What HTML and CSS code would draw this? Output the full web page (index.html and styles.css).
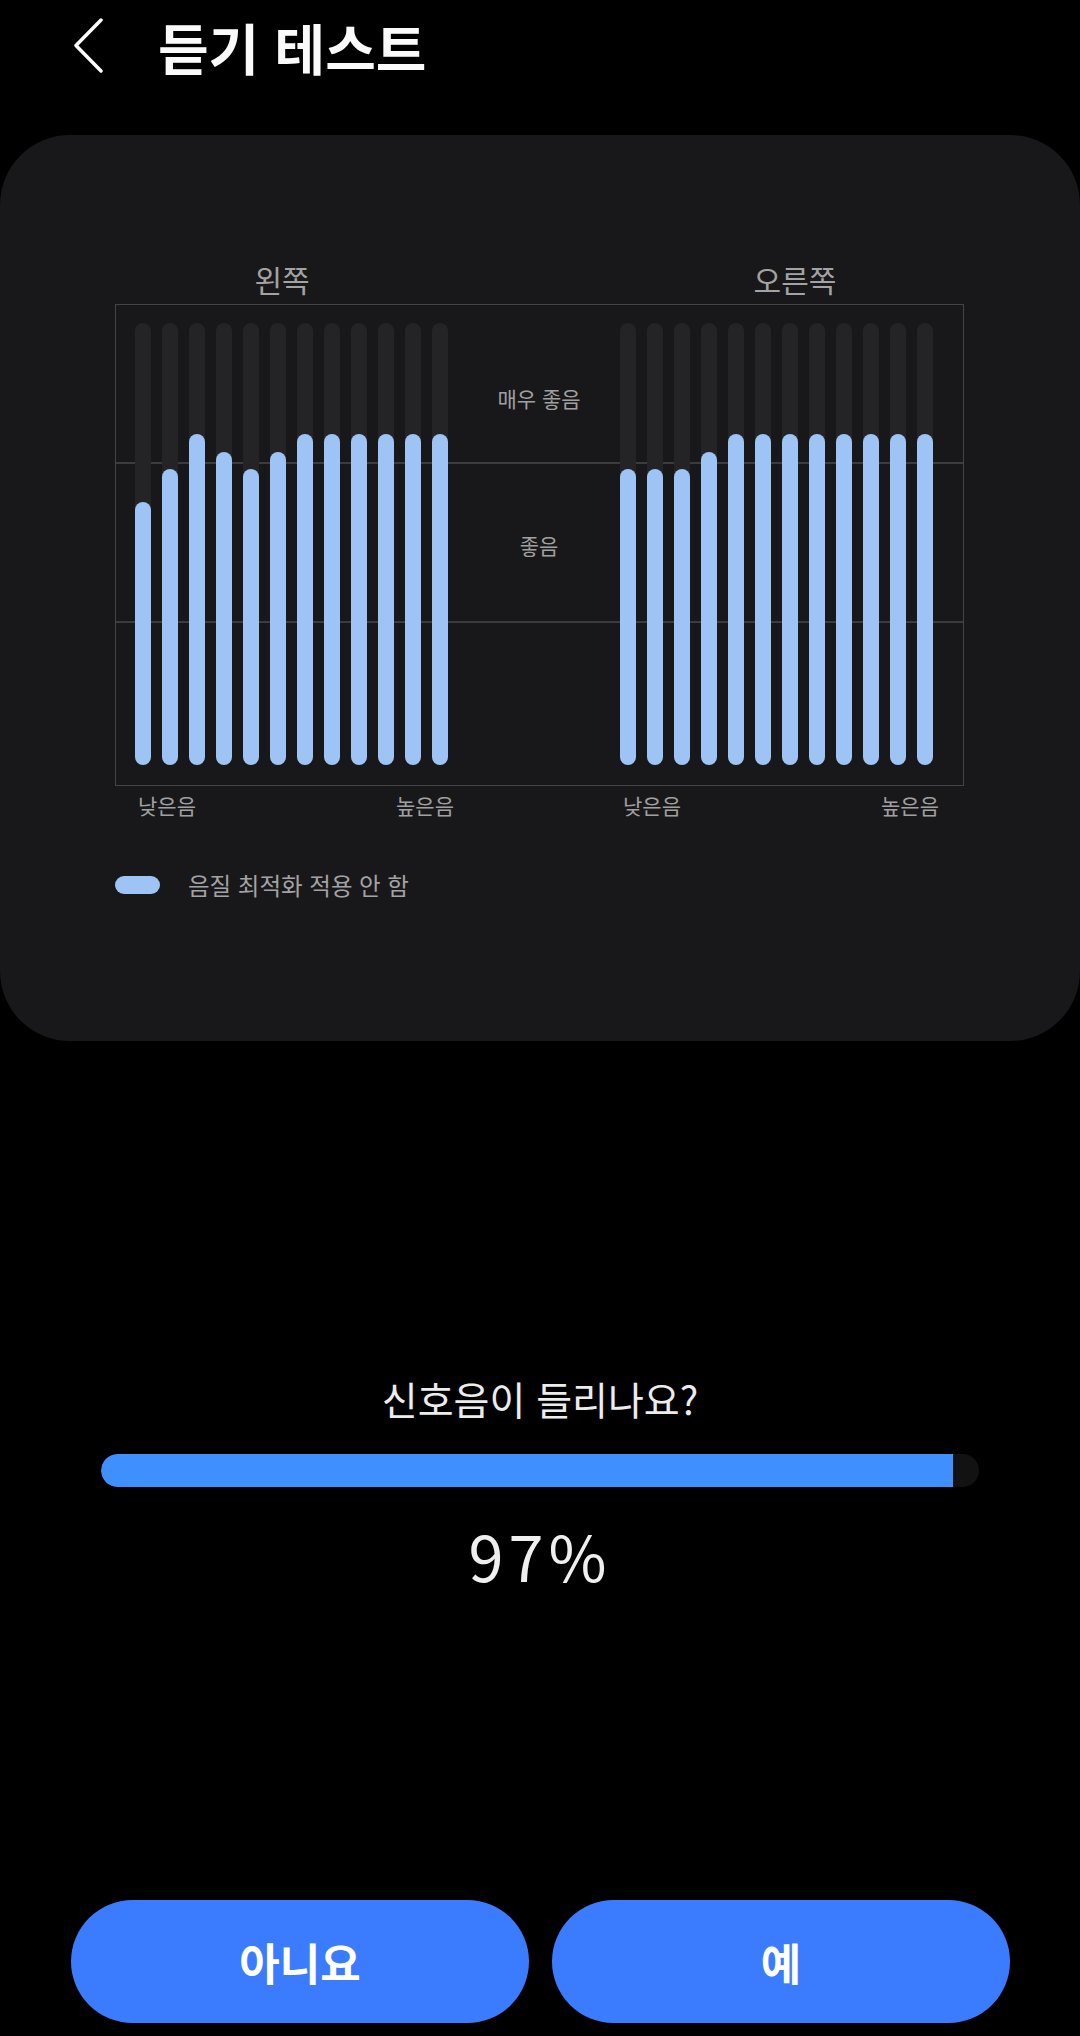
FILE: index.html
```html
<!DOCTYPE html>
<html lang="ko">
<head>
    <meta charset="UTF-8">
    <meta name="viewport" content="width=device-width, initial-scale=1.0">
    <title>듣기 테스트</title>
    <link rel="stylesheet" href="styles.css">
</head>
<body>
    <div class="screen">
        <div class="appbar">
            <svg class="back" width="30" height="56" viewBox="0 0 30 56">
                <path d="M28 2 L3 27.5 L28 53" fill="none" stroke="#ffffff" stroke-width="3.5" stroke-linecap="round" stroke-linejoin="round"/>
            </svg>
            <h1>듣기 테스트</h1>
        </div>

        <div class="card">
            <div class="sides">
                <div class="side left">왼쪽</div>
                <div class="side right">오른쪽</div>
            </div>

            <div class="chart">
                <div class="bars" id="leftBars"></div>
                <div class="levels">
                    <div class="level top">매우 좋음</div>
                    <div class="level mid">좋음</div>
                </div>
                <div class="bars" id="rightBars"></div>
            </div>

            <div class="axis">
                <div class="axis-group"><span>낮은음</span><span>높은음</span></div>
                <div class="axis-group"><span>낮은음</span><span>높은음</span></div>
            </div>

            <div class="legend">
                <span class="swatch"></span>
                <span>음질 최적화 적용 안 함</span>
            </div>
        </div>

        <div class="test">
            <div class="question">신호음이 들리나요?</div>
            <div class="progress"><div class="fill" id="fill"></div></div>
            <div class="percent" id="percent">97%</div>
        </div>

        <div class="actions">
            <button type="button" class="btn">아니요</button>
            <button type="button" class="btn">예</button>
        </div>
    </div>

    <script>
        const leftLevels = [263, 296, 331, 313, 296, 313, 331, 331, 331, 331, 331, 331];
        const rightLevels = [296, 296, 296, 313, 331, 331, 331, 331, 331, 331, 331, 331];

        function drawBars(id, levels) {
            const box = document.getElementById(id);
            levels.forEach(function (h) {
                const track = document.createElement('div');
                track.className = 'track';
                const val = document.createElement('div');
                val.className = 'value';
                val.style.height = h + 'px';
                track.appendChild(val);
                box.appendChild(track);
            });
        }

        drawBars('leftBars', leftLevels);
        drawBars('rightBars', rightLevels);

        const progress = 97;
        document.getElementById('fill').style.width = progress + '%';
        document.getElementById('percent').textContent = progress + '%';
    </script>
</body>
</html>
```

FILE: styles.css
```css
body {
    margin: 0;
    background-color: #000;
    font-family: "Noto Sans CJK KR", "Noto Sans", sans-serif;
    color: #fff;
}
.screen {
    width: 1080px;
    height: 2036px;
    overflow: hidden;
}
.appbar {
    height: 135px;
    display: flex;
    align-items: flex-start;
    box-sizing: border-box;
    padding-top: 16px;
}
.back {
    margin-left: 73px;
    margin-top: 2px;
}
h1 {
    margin: 0 0 0 55px;
    font-size: 55px;
    line-height: 60px;
    font-weight: 700;
    color: #fafafa;
}
.card {
    height: 906px;
    box-sizing: border-box;
    background-color: #18181a;
    border-radius: 70px;
    padding-top: 127px;
}
.sides {
    display: flex;
    height: 34px;
}
.side {
    width: 200px;
    text-align: center;
    font-size: 30px;
    line-height: 34px;
    color: #a3a3a3;
}
.side.left {
    margin-left: 182px;
}
.side.right {
    margin-left: 313px;
}
.chart {
    margin: 8px 0 0 115px;
    width: 849px;
    height: 482px;
    box-sizing: border-box;
    border: 1px solid #444446;
    display: flex;
    padding: 18px 0 0 19px;
    background:
        linear-gradient(#3c3c3e, #3c3c3e) 0 157px / 100% 2px no-repeat,
        linear-gradient(#3c3c3e, #3c3c3e) 0 316px / 100% 2px no-repeat;
}
.bars {
    display: flex;
    gap: 11px;
    height: 442px;
}
.track {
    width: 16px;
    height: 442px;
    border-radius: 8px;
    background-color: #242426;
    display: flex;
    align-items: flex-end;
}
.value {
    width: 16px;
    border-radius: 8px;
    background-color: #9ec4f5;
}
.levels {
    width: 172px;
    box-sizing: border-box;
    padding-left: 10px;
    text-align: center;
    font-size: 21px;
    line-height: 26px;
    color: #a0a0a0;
}
.level.top {
    margin-top: 62px;
}
.level.mid {
    margin-top: 121px;
}
.axis {
    display: flex;
    gap: 169px;
    padding-left: 138px;
    margin-top: 6px;
}
.axis-group {
    width: 316px;
    display: flex;
    justify-content: space-between;
    font-size: 21px;
    line-height: 26px;
    color: #a0a0a0;
}
.legend {
    display: flex;
    align-items: center;
    gap: 28px;
    margin-top: 53px;
    padding-left: 115px;
    font-size: 23.5px;
    line-height: 28px;
    color: #a3a3a3;
}
.swatch {
    width: 45px;
    height: 18px;
    border-radius: 9px;
    background-color: #9ec4f5;
}
.test {
    padding-top: 334px;
    text-align: center;
}
.question {
    font-size: 39px;
    line-height: 46px;
    color: #ececec;
}
.progress {
    margin: 33px 0 0 101px;
    width: 878px;
    height: 33px;
    border-radius: 17px;
    background-color: #121212;
    overflow: hidden;
}
.fill {
    height: 100%;
    background-color: #3f8fff;
    border-radius: 17px 0 0 17px;
}
.percent {
    margin-top: 30px;
    font-size: 63px;
    line-height: 76px;
    letter-spacing: 5px;
    color: #efefef;
}
.actions {
    display: flex;
    gap: 23px;
    padding-left: 71px;
    margin-top: 307px;
}
.btn {
    width: 458px;
    height: 123px;
    border: none;
    border-radius: 62px;
    background-color: #3b7cff;
    color: #fff;
    font-family: "Noto Sans CJK KR", "Noto Sans", sans-serif;
    font-size: 44px;
    font-weight: 700;
}
```
